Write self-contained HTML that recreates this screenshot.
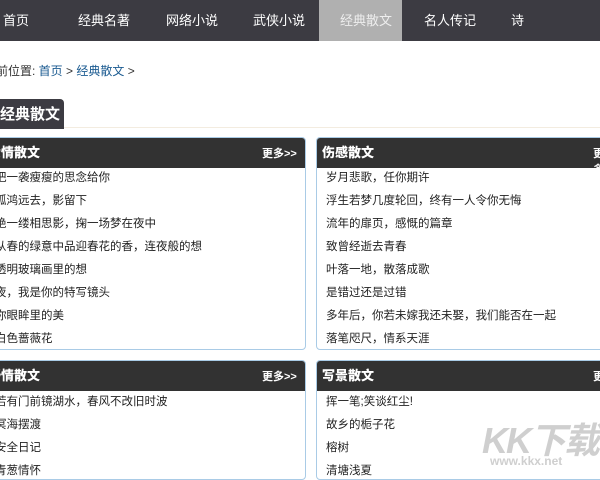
<!DOCTYPE html>
<html><head><meta charset="utf-8"><style>
*{margin:0;padding:0;box-sizing:border-box}
body{width:600px;height:469px;overflow:hidden;background:#fff;font-family:"Liberation Sans","Noto Sans CJK SC",sans-serif;position:relative;font-size:12px;color:#222}
.nav{position:absolute;left:0;top:0;width:600px;height:41px;background:#3c3b42}
.nav span{position:absolute;top:10px;color:#fff;font-size:13px}
.act{position:absolute;left:319px;top:0;width:83px;height:41px;background:#b0b0b0}
.bc{position:absolute;left:-4px;top:62px;font-size:12px;color:#333}
.bc a{color:#1a5a90;text-decoration:none}
.tt{position:absolute;left:-6px;top:99px;width:70px;height:30px;background:#3c3b42;border-radius:0 4px 0 0;color:#fff;font-weight:bold;font-size:15px;padding:4px 0 0 6px}
.line{position:absolute;left:64px;top:127px;width:536px;height:1px;background:#f3ece0}
.box{position:absolute;border:1px solid #a9cbe6;border-radius:4px;overflow:hidden;background:#fff}
.hd{height:30px;background:#323232;color:#fff;font-weight:bold;font-size:13px;position:relative}
.hd b{position:absolute;top:4px}
.hd i{position:absolute;top:7px;font-style:normal;font-size:11px}
.box p{position:absolute;font-size:11.5px;white-space:nowrap}
.wm{position:absolute;color:#cfcfcf;font-weight:bold;white-space:nowrap}
</style></head><body>
<div class="nav"><div class="act"></div>
<span style="left:3px">首页</span><span style="left:78px">经典名著</span><span style="left:166px">网络小说</span><span style="left:253px">武侠小说</span><span style="left:340px;color:#eee">经典散文</span><span style="left:424px">名人传记</span><span style="left:511px">诗</span></div>
<div class="bc">前位置: <a>首页</a> &gt; <a>经典散文</a> &gt;</div>
<div class="tt">经典散文</div><div class="line"></div>

<div class="box" style="left:-10px;top:137px;width:316px;height:213px"><div class="hd"><b style="left:-3px">爱情散文</b><i style="left:271px">更多&gt;&gt;</i></div>
<p style="left:4px;top:31px">把一袭瘦瘦的思念给你</p><p style="left:4px;top:54px">孤鸿远去，影留下</p><p style="left:4px;top:77px">绝一缕相思影，掬一场梦在夜中</p><p style="left:4px;top:100px">从春的绿意中品迎春花的香，连夜般的想</p><p style="left:4px;top:123px">透明玻璃画里的想</p><p style="left:4px;top:146px">夜，我是你的特写镜头</p><p style="left:4px;top:169px">你眼眸里的美</p><p style="left:4px;top:192px">白色蔷薇花</p></div>

<div class="box" style="left:316px;top:137px;width:294px;height:213px"><div class="hd"><b style="left:5px">伤感散文</b><i style="left:276px">更多</i></div>
<p style="left:9px;top:31px">岁月悲歌，任你期许</p><p style="left:9px;top:54px">浮生若梦几度轮回，终有一人令你无悔</p><p style="left:9px;top:77px">流年的扉页，感慨的篇章</p><p style="left:9px;top:100px">致曾经逝去青春</p><p style="left:9px;top:123px">叶落一地，散落成歌</p><p style="left:9px;top:146px">是错过还是过错</p><p style="left:9px;top:169px">多年后，你若未嫁我还未娶，我们能否在一起</p><p style="left:9px;top:192px">落笔咫尺，情系天涯</p></div>

<div class="box" style="left:-10px;top:360px;width:316px;height:120px"><div class="hd"><b style="left:-3px">抒情散文</b><i style="left:271px">更多&gt;&gt;</i></div>
<p style="left:4px;top:32px">若有门前镜湖水，春风不改旧时波</p><p style="left:4px;top:55px">冥海摆渡</p><p style="left:4px;top:78px">安全日记</p><p style="left:4px;top:101px">青葱情怀</p></div>

<div class="box" style="left:316px;top:360px;width:294px;height:120px"><div class="hd"><b style="left:5px">写景散文</b><i style="left:276px">更</i></div>
<p style="left:9px;top:32px">挥一笔;笑谈红尘!</p><p style="left:9px;top:55px">故乡的栀子花</p><p style="left:9px;top:78px">榕树</p><p style="left:9px;top:101px">清塘浅夏</p></div>

<div class="wm" style="left:482px;top:412px;font-size:36px;letter-spacing:-2px;font-style:italic">KK下载</div>
<div class="wm" style="left:490px;top:454px;font-size:12px">www.kkx.net</div>
</body></html>
